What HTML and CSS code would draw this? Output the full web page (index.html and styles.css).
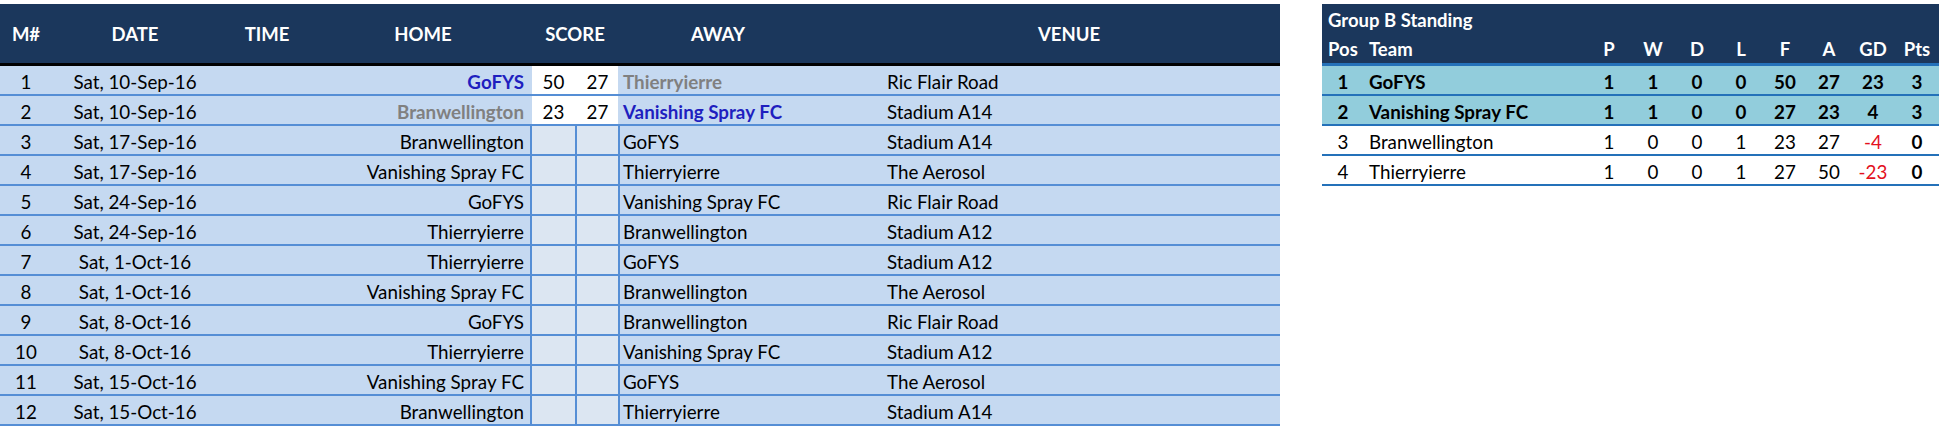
FILE: index.html
```html
<!DOCTYPE html>
<html>
<head>
<meta charset="utf-8">
<link rel="stylesheet" href="styles.css">
</head>
<body>
<div class="page">
  <div class="fixtures">
    <div class="frow fhead">
      <div class="c c-num">M#</div>
      <div class="c c-date">DATE</div>
      <div class="c c-time">TIME</div>
      <div class="c c-home hc">HOME</div>
      <div class="c c-score-h">SCORE</div>
      <div class="c c-away hc-away">AWAY</div>
      <div class="c c-venue hc-venue">VENUE</div>
    </div>
    <div class="frow played">
      <div class="c c-num">1</div>
      <div class="c c-date">Sat, 10-Sep-16</div>
      <div class="c c-time"></div>
      <div class="c c-home win">GoFYS</div>
      <div class="c c-s1">50</div>
      <div class="c c-s2">27</div>
      <div class="c c-away lose">Thierryierre</div>
      <div class="c c-venue">Ric Flair Road</div>
    </div>
    <div class="frow played">
      <div class="c c-num">2</div>
      <div class="c c-date">Sat, 10-Sep-16</div>
      <div class="c c-time"></div>
      <div class="c c-home lose">Branwellington</div>
      <div class="c c-s1">23</div>
      <div class="c c-s2">27</div>
      <div class="c c-away win">Vanishing Spray FC</div>
      <div class="c c-venue">Stadium A14</div>
    </div>
    <div class="frow">
      <div class="c c-num">3</div>
      <div class="c c-date">Sat, 17-Sep-16</div>
      <div class="c c-time"></div>
      <div class="c c-home">Branwellington</div>
      <div class="c c-s1"></div>
      <div class="c c-s2"></div>
      <div class="c c-away">GoFYS</div>
      <div class="c c-venue">Stadium A14</div>
    </div>
    <div class="frow">
      <div class="c c-num">4</div>
      <div class="c c-date">Sat, 17-Sep-16</div>
      <div class="c c-time"></div>
      <div class="c c-home">Vanishing Spray FC</div>
      <div class="c c-s1"></div>
      <div class="c c-s2"></div>
      <div class="c c-away">Thierryierre</div>
      <div class="c c-venue">The Aerosol</div>
    </div>
    <div class="frow">
      <div class="c c-num">5</div>
      <div class="c c-date">Sat, 24-Sep-16</div>
      <div class="c c-time"></div>
      <div class="c c-home">GoFYS</div>
      <div class="c c-s1"></div>
      <div class="c c-s2"></div>
      <div class="c c-away">Vanishing Spray FC</div>
      <div class="c c-venue">Ric Flair Road</div>
    </div>
    <div class="frow">
      <div class="c c-num">6</div>
      <div class="c c-date">Sat, 24-Sep-16</div>
      <div class="c c-time"></div>
      <div class="c c-home">Thierryierre</div>
      <div class="c c-s1"></div>
      <div class="c c-s2"></div>
      <div class="c c-away">Branwellington</div>
      <div class="c c-venue">Stadium A12</div>
    </div>
    <div class="frow">
      <div class="c c-num">7</div>
      <div class="c c-date">Sat, 1-Oct-16</div>
      <div class="c c-time"></div>
      <div class="c c-home">Thierryierre</div>
      <div class="c c-s1"></div>
      <div class="c c-s2"></div>
      <div class="c c-away">GoFYS</div>
      <div class="c c-venue">Stadium A12</div>
    </div>
    <div class="frow">
      <div class="c c-num">8</div>
      <div class="c c-date">Sat, 1-Oct-16</div>
      <div class="c c-time"></div>
      <div class="c c-home">Vanishing Spray FC</div>
      <div class="c c-s1"></div>
      <div class="c c-s2"></div>
      <div class="c c-away">Branwellington</div>
      <div class="c c-venue">The Aerosol</div>
    </div>
    <div class="frow">
      <div class="c c-num">9</div>
      <div class="c c-date">Sat, 8-Oct-16</div>
      <div class="c c-time"></div>
      <div class="c c-home">GoFYS</div>
      <div class="c c-s1"></div>
      <div class="c c-s2"></div>
      <div class="c c-away">Branwellington</div>
      <div class="c c-venue">Ric Flair Road</div>
    </div>
    <div class="frow">
      <div class="c c-num">10</div>
      <div class="c c-date">Sat, 8-Oct-16</div>
      <div class="c c-time"></div>
      <div class="c c-home">Thierryierre</div>
      <div class="c c-s1"></div>
      <div class="c c-s2"></div>
      <div class="c c-away">Vanishing Spray FC</div>
      <div class="c c-venue">Stadium A12</div>
    </div>
    <div class="frow">
      <div class="c c-num">11</div>
      <div class="c c-date">Sat, 15-Oct-16</div>
      <div class="c c-time"></div>
      <div class="c c-home">Vanishing Spray FC</div>
      <div class="c c-s1"></div>
      <div class="c c-s2"></div>
      <div class="c c-away">GoFYS</div>
      <div class="c c-venue">The Aerosol</div>
    </div>
    <div class="frow">
      <div class="c c-num">12</div>
      <div class="c c-date">Sat, 15-Oct-16</div>
      <div class="c c-time"></div>
      <div class="c c-home">Branwellington</div>
      <div class="c c-s1"></div>
      <div class="c c-s2"></div>
      <div class="c c-away">Thierryierre</div>
      <div class="c c-venue">Stadium A14</div>
    </div>
  </div>

  <div class="standing">
    <div class="shead">
      <div class="stitle">Group B Standing</div>
      <div class="srow scols">
        <div class="s s-pos">Pos</div>
        <div class="s s-team">Team</div>
        <div class="s">P</div>
        <div class="s">W</div>
        <div class="s">D</div>
        <div class="s">L</div>
        <div class="s">F</div>
        <div class="s">A</div>
        <div class="s">GD</div>
        <div class="s">Pts</div>
      </div>
    </div>
    <div class="srow sbody top">
      <div class="s s-pos">1</div>
      <div class="s s-team">GoFYS</div>
      <div class="s">1</div>
      <div class="s">1</div>
      <div class="s">0</div>
      <div class="s">0</div>
      <div class="s">50</div>
      <div class="s">27</div>
      <div class="s">23</div>
      <div class="s s-pts">3</div>
    </div>
    <div class="srow sbody top">
      <div class="s s-pos">2</div>
      <div class="s s-team">Vanishing Spray FC</div>
      <div class="s">1</div>
      <div class="s">1</div>
      <div class="s">0</div>
      <div class="s">0</div>
      <div class="s">27</div>
      <div class="s">23</div>
      <div class="s">4</div>
      <div class="s s-pts">3</div>
    </div>
    <div class="srow sbody">
      <div class="s s-pos">3</div>
      <div class="s s-team">Branwellington</div>
      <div class="s">1</div>
      <div class="s">0</div>
      <div class="s">0</div>
      <div class="s">1</div>
      <div class="s">23</div>
      <div class="s">27</div>
      <div class="s neg">-4</div>
      <div class="s s-pts">0</div>
    </div>
    <div class="srow sbody">
      <div class="s s-pos">4</div>
      <div class="s s-team">Thierryierre</div>
      <div class="s">1</div>
      <div class="s">0</div>
      <div class="s">0</div>
      <div class="s">1</div>
      <div class="s">27</div>
      <div class="s">50</div>
      <div class="s neg">-23</div>
      <div class="s s-pts">0</div>
    </div>
  </div>
</div>
</body>
</html>
```

FILE: styles.css
```css
* { box-sizing: border-box; }

html, body {
  margin: 0;
  padding: 0;
  background: #ffffff;
}

body {
  font-family: Lato, "Liberation Sans", sans-serif;
  font-size: 18.8px;
  color: #000000;
}

.page {
  display: flex;
  align-items: flex-start;
  gap: 42px;
  padding-top: 4px;
}

/* ---------- fixtures ---------- */
.fixtures {
  width: 1280px;
  display: flex;
  flex-direction: column;
}

.frow {
  display: grid;
  grid-template-columns: 52px 166px 98px 214px 45px 43px 262px 400px;
  height: 30px;
  background: #c5d9f1;
  border-bottom: 2px solid #558ed5;
}

.c {
  display: flex;
  align-items: center;
  padding-top: 2px;
  white-space: nowrap;
  overflow: visible;
}

.c-num, .c-date, .c-time, .c-s1, .c-s2 { justify-content: center; }
.c-home { justify-content: flex-end; padding-right: 6px; }
.c-away { padding-left: 3px; }
.c-venue { padding-left: 7px; }

.c-s1, .c-s2, .c-away {
  border-left: 2px solid #558ed5;
}
.c-s1, .c-s2 {
  background: #dce6f2;
  background-clip: padding-box;
}

.played .c-s1, .played .c-s2 {
  background: #ffffff;
}
.played .c-s1 {
  border-left-color: transparent;
  background-clip: padding-box;
}
.played .c-s2 {
  border-left-color: transparent;
  background-clip: border-box;
}
.played .c-away {
  border-left-color: transparent;
}

.win { color: #1f1fbf; font-weight: 700; }
.lose { color: #808080; font-weight: 700; }

.fhead {
  height: 62px;
  background: #1b375c;
  border-bottom: 3px solid #000000;
  grid-template-columns: 52px 166px 98px 214px 88px 262px 400px;
}
.fhead .c {
  color: #ffffff;
  font-weight: 700;
  font-size: 18.5px;
  justify-content: center;
  padding: 0;
}
.fhead .c-score-h { padding-left: 2px; }
.fhead .hc-away { padding: 0 62px 0 0; border: none; }
.fhead .hc-venue { padding: 0 22px 0 0; }

/* ---------- standing ---------- */
.standing {
  width: 617px;
  display: flex;
  flex-direction: column;
}

.shead {
  background: #1b375c;
  border-bottom: 3px solid #2471b9;
  color: #ffffff;
  font-weight: 700;
  font-size: 18.5px;
  height: 62px;
  display: flex;
  flex-direction: column;
}

.stitle {
  height: 29px;
  display: flex;
  align-items: center;
  padding-left: 6px;
  padding-top: 2px;
}

.srow {
  display: grid;
  grid-template-columns: 42px 223px repeat(8, 44px);
}

.scols { height: 30px; }

.s {
  display: flex;
  align-items: center;
  justify-content: center;
  padding-top: 2px;
  white-space: nowrap;
}
.s-team { justify-content: flex-start; padding-left: 5px; }
.scols .s-pos { justify-content: flex-start; padding-left: 6px; }

.sbody {
  height: 30px;
  border-bottom: 2px solid #2471b9;
  background: #ffffff;
}
.sbody.top {
  background: #92cddc;
  font-weight: 700;
}
.s-pts { font-weight: 700; }
.neg { color: #e3101d; }
```
